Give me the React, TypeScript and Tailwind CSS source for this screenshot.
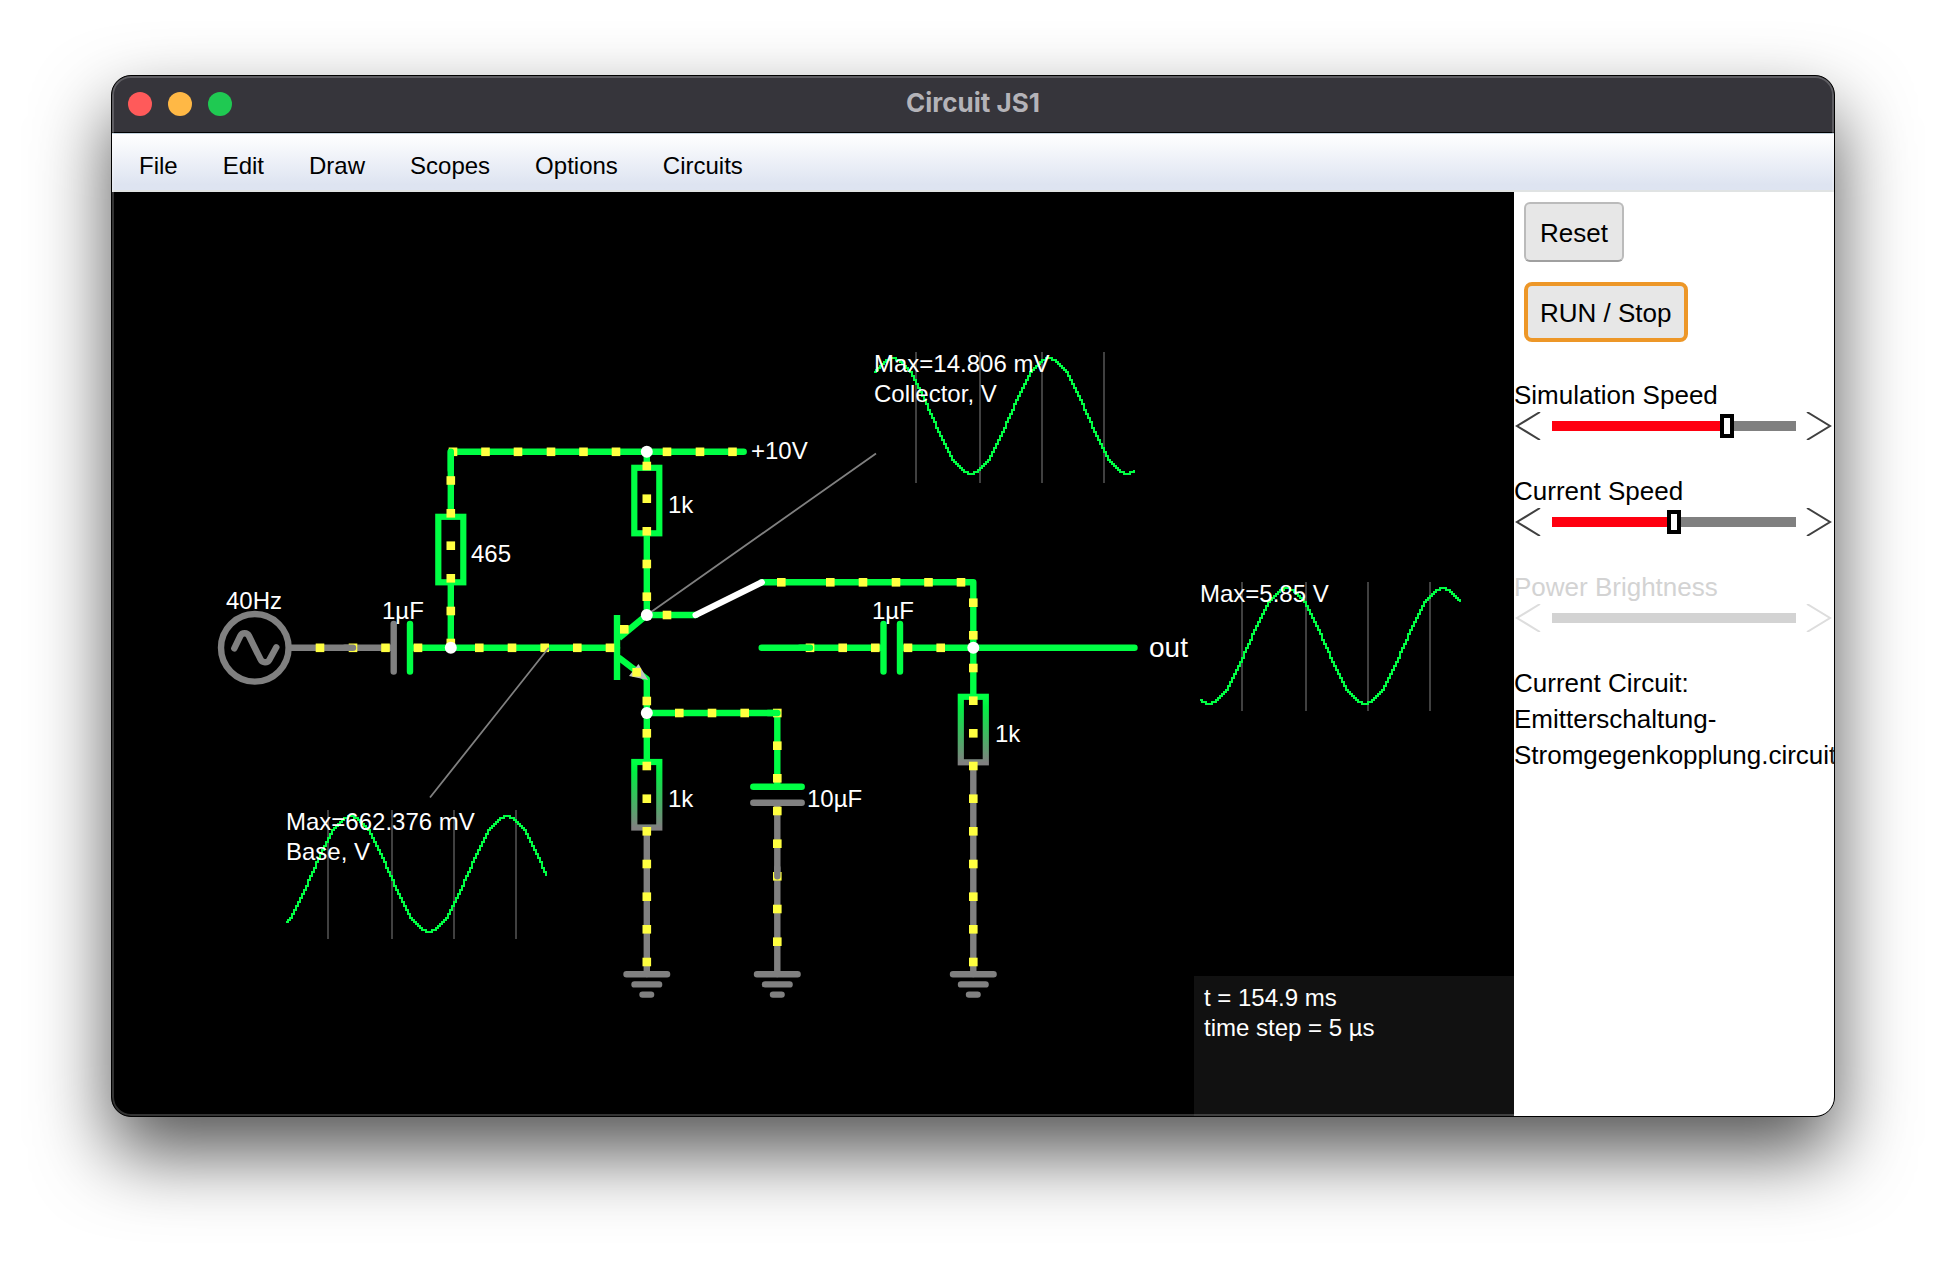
import React from "react";

const GREEN = "#00ff44";
const GRAY = "#808080";
const YELLOW = "#ffff40";

type Point = [number, number];

const column = (x: number, ys: number[]): Point[] => ys.map((y) => [x, y]);
const row = (y: number, xs: number[]): Point[] => xs.map((x) => [x, y]);

const MENUS = ["File", "Edit", "Draw", "Scopes", "Options", "Circuits"];

const CURRENT_DOTS: Point[] = [
  ...row(451.8, [453, 485.5, 518, 551, 583.5, 616, 667, 700, 732.5]),
  ...column(450.8, [480.5, 513.3, 545.7, 578.3, 611, 643]),
  ...row(647.8, [320, 353, 385.5, 418, 479.3, 512, 544.7, 577.3, 610]),
  ...column(646.8, [466, 498.7, 531.3, 564, 596.7, 701, 733.3, 766, 798.7, 831.3, 864, 896.7, 929.3, 962]),
  ...row(713, [679.3, 712, 744.7, 777.3]),
  ...column(777.3, [745.7, 778.3, 811, 843.7, 876.3, 909, 941.7]),
  [667, 615],
  ...row(582.3, [781.3, 830.3, 863, 896, 928.5, 961]),
  ...row(647.8, [810, 842.7, 875.3, 908, 940.7]),
  ...column(973.3, [602.7, 635.3, 668, 700.7, 733.3, 766, 798.7, 831.3, 864, 896.7, 929.3, 962]),
  [624.3, 629.3],
  [636.7, 672.3],
];

const NODES: Point[] = [
  [646.8, 451.8],
  [450.8, 647.8],
  [646.8, 615],
  [646.8, 713],
  [973.3, 647.8],
];

const LABELS: { x: number; y: number; text: string; large?: boolean }[] = [
  { x: 226, y: 609, text: "40Hz" },
  { x: 382, y: 619, text: "1µF" },
  { x: 471, y: 562, text: "465" },
  { x: 751, y: 459, text: "+10V" },
  { x: 668, y: 513, text: "1k" },
  { x: 668, y: 807, text: "1k" },
  { x: 807, y: 807, text: "10µF" },
  { x: 995, y: 742, text: "1k" },
  { x: 872, y: 619, text: "1µF" },
  { x: 1149, y: 657, text: "out", large: true },
];

function Wire({ d, color = GREEN, cap = "round" }: { d: string; color?: string; cap?: "round" | "butt" }) {
  return <path d={d} fill="none" stroke={color} strokeWidth={6.4} strokeLinecap={cap} strokeLinejoin="round" />;
}

function Resistor({ x, y, stroke }: { x: number; y: number; stroke: string }) {
  return <rect x={x - 12.5} y={y} width={25} height={65.5} fill="#000" stroke={stroke} strokeWidth={6.2} />;
}

function Ground({ x }: { x: number }) {
  return <Wire color={GRAY} d={`M${x - 20.3} 974.3H${x + 20.3}M${x - 12.3} 984.4H${x + 12.3}M${x - 4.3} 994.6H${x + 4.3}`} />;
}

/* Scope trace sampled in two-pixel steps. */
function Scope(props: {
  x: number;
  top: number;
  height: number;
  peak: number;
  mid: number;
  lines: number[];
  captions: string[];
  baseline: number;
}) {
  const { x, top, height, peak, mid, lines, captions, baseline } = props;
  const sample = (px: number) => {
    const value = mid - 57.5 * Math.cos((2 * Math.PI * (px - peak)) / 156);
    return Math.round(value / 2) * 2;
  };
  let d = `M${x} ${sample(x)}`;
  for (let px = x + 2; px <= x + 260; px += 2) d += `H${px}V${sample(px)}`;
  return (
    <g>
      {lines.map((lx) => (
        <path key={lx} d={`M${lx} ${top}V${top + height}`} stroke="#404040" strokeWidth={2} shapeRendering="crispEdges" />
      ))}
      <path d={d} fill="none" stroke={GREEN} strokeWidth={2} shapeRendering="crispEdges" />
      {captions.map((caption, i) => (
        <text key={caption} x={x} y={baseline + i * 30} className="fill-white text-2xl">
          {caption}
        </text>
      ))}
    </g>
  );
}

function CircuitCanvas() {
  return (
    <svg viewBox="112 192 1402 924" className="block h-auto w-full" role="img" aria-label="Circuit diagram">
      <defs>
        <linearGradient id="drop" x1="0" y1="0" x2="0" y2="1">
          <stop offset="0" stopColor={GREEN} />
          <stop offset="0.15" stopColor="#00f042" />
          <stop offset="1" stopColor={GRAY} />
        </linearGradient>
      </defs>

      <Scope x={874} top={352} height={131} peak={1048} mid={416} lines={[916, 980, 1042, 1104]} captions={["Max=14.806 mV", "Collector, V"]} baseline={372} />
      <Scope x={286} top={810} height={129} peak={506} mid={874} lines={[328, 392, 454, 516]} captions={["Max=662.376 mV", "Base, V"]} baseline={830} />
      <Scope x={1200} top={582} height={129} peak={1442} mid={646} lines={[1242, 1306, 1368, 1430]} captions={["Max=5.85 V"]} baseline={602} />

      {/* voltage source */}
      <circle cx={254.8} cy={647.8} r={33.8} fill="none" stroke={GRAY} strokeWidth={6.4} />
      <Wire color={GRAY} d="M234.3 648.3L240.3 636Q241.7 633.3 244.7 633.3T249 636L260.7 659.7Q262 662.3 265 662.3T269.3 660L276.3 647.3" />
      <Wire color={GRAY} d="M291 647.8H393.7M393.7 624V671.5" />

      {/* base network */}
      <Wire d="M410 647.8H617M410 624V671.5M450.8 451.8V514M450.8 583V647.8M450.8 451.8H743.7" />
      <Resistor x={450.8} y={516.8} stroke={GREEN} />

      {/* collector resistor and transistor */}
      <Wire d="M646.8 451.8V466M646.8 535V615" />
      <Resistor x={646.8} y={467.8} stroke={GREEN} />
      <Wire cap="butt" d="M617 615V680" />
      <Wire cap="butt" d="M619 638L646.8 615" />
      <Wire d="M646.8 615H695.7M620 658.5L646.8 679V759" />
      <path d="M648 680L638.5 664L629 676Z" fill="#c0c0c0" />

      {/* emitter branch */}
      <Wire d="M646.8 713H777.3V786.7M753.3 786.7H801.7" />
      <Wire color={GRAY} d="M777.3 802.7V974M753.3 802.7H801.7M646.8 830V974M973.3 765V974" />
      <Resistor x={646.8} y={762} stroke="url(#drop)" />

      {/* switch and output */}
      <Wire d="M761.7 582.3H973.3V695M761.7 647.8H883.5M883.5 624V671.5M900 624V671.5M900 647.8H1134.5" />
      <Resistor x={973.3} y={696.8} stroke="url(#drop)" />
      <Wire color="#fff" d="M695.7 615L761.7 582.3" />

      <Ground x={646.8} />
      <Ground x={777.3} />
      <Ground x={973.3} />

      {CURRENT_DOTS.map(([x, y]) => (
        <rect key={`${x},${y}`} x={x - 4.3} y={y - 4.3} width={8.6} height={8.6} fill={YELLOW} />
      ))}

      {/* wire ends that cover the dots at their joints */}
      <Wire color={GRAY} d="M345 647.8H353M777.3 868V876.3" />
      <Wire d="M450.8 451.8V470M768 713H777.3M800 647.8H810" />

      <path d="M646.8 615L876 453.5M548.7 647.8L430 797.5" stroke={GRAY} strokeWidth={1.8} />
      {NODES.map(([x, y]) => (
        <circle key={`${x},${y}`} cx={x} cy={y} r={6} fill="#fff" />
      ))}

      {LABELS.map(({ x, y, text, large }) => (
        <text key={`${x},${y}`} x={x} y={y} className={large ? "fill-white text-[28px]" : "fill-white text-2xl"}>
          {text}
        </text>
      ))}
    </svg>
  );
}

function Arrow({ direction }: { direction: "left" | "right" }) {
  return (
    <svg viewBox="0 0 28 28" className="block h-7 w-7" fill="none" stroke="currentColor" strokeWidth={2}>
      <path d={direction === "left" ? "M26 0L3 14L26 28" : "M1 0L24 14L1 28"} />
    </svg>
  );
}

function Slider({ id, label, value, disabled = false }: { id: string; label: string; value: number; disabled?: boolean }) {
  const [current, setCurrent] = React.useState(value);
  const rest = disabled ? "#d3d3d3" : "#808080";
  const fill = disabled ? rest : "#ff0010";
  return (
    <div className={disabled ? "text-[#d3d3d3]" : "text-black"}>
      <label htmlFor={id} className="block leading-[30px]">
        {label}
      </label>
      <div className={disabled ? "mt-0.5 flex items-center text-[#dddddd]" : "mt-0.5 flex items-center text-[#404040]"}>
        <button type="button" aria-label={`Decrease ${label}`} disabled={disabled} onClick={() => setCurrent(current - 1)}>
          <Arrow direction="left" />
        </button>
        <input
          id={id}
          type="range"
          min={0}
          max={100}
          value={current}
          disabled={disabled}
          onChange={(e) => setCurrent(Number(e.target.value))}
          className="mx-2.5 h-6 min-w-0 flex-1 appearance-none bg-transparent bg-[length:100%_10px] bg-center bg-no-repeat [&::-webkit-slider-thumb]:h-6 [&::-webkit-slider-thumb]:w-3.5 [&::-webkit-slider-thumb]:appearance-none [&::-webkit-slider-thumb]:border-4 [&::-webkit-slider-thumb]:border-black [&::-webkit-slider-thumb]:bg-white disabled:[&::-webkit-slider-thumb]:opacity-0"
          style={{ backgroundImage: `linear-gradient(to right, ${fill} ${current}%, ${rest} ${current}%)` }}
        />
        <button type="button" aria-label={`Increase ${label}`} disabled={disabled} onClick={() => setCurrent(current + 1)}>
          <Arrow direction="right" />
        </button>
      </div>
    </div>
  );
}

export default function App() {
  return (
    <div className="min-h-screen bg-white px-[111px] pt-[75px] pb-[147px] font-['Liberation_Sans',Arial,sans-serif] text-black">
      <div className="relative overflow-hidden rounded-[20px] border border-black bg-black shadow-[0_36px_76px_rgba(0,0,0,0.67)]">
        <header className="grid h-[57px] grid-cols-[1fr_auto_1fr] items-center border-b border-black bg-[#36353b] px-4">
          <div className="flex gap-4">
            <button type="button" aria-label="Close" className="size-6 rounded-full bg-[#ff5a5a]" />
            <button type="button" aria-label="Minimize" className="size-6 rounded-full bg-[#ffb845]" />
            <button type="button" aria-label="Zoom" className="size-6 rounded-full bg-[#1fc952]" />
          </div>
          <h1 className="pb-0.5 font-[Inter,sans-serif] text-[26px] leading-8 font-bold text-[#b4b3b8]">Circuit JS1</h1>
        </header>

        <nav className="flex h-[59px] items-center gap-[45px] border-t border-b-2 border-t-[#c4d3df] border-b-[#e0e3e3] bg-linear-to-b from-white to-[#dee4f1] to-90% pt-2 pl-[27px] text-2xl">
          {MENUS.map((menu) => (
            <button key={menu} type="button">
              {menu}
            </button>
          ))}
        </nav>

        <div className="flex">
          <main className="relative min-w-0 flex-1 bg-black">
            <CircuitCanvas />
            <div className="absolute right-0 bottom-0 h-[140px] w-80 bg-[#111111] px-2.5 py-[7px] text-2xl leading-[30px] text-white">
              <p>t = 154.9 ms</p>
              <p>time step = 5 µs</p>
            </div>
          </main>

          <aside className="w-80 shrink-0 overflow-hidden bg-white text-[26px]">
            <div className="flex flex-col items-start gap-5 pt-2.5 pl-2.5">
              <button type="button" className="h-[60px] rounded-md border-2 border-[#bbbbbb] border-b-[#a0a0a0] bg-[#e7e7e7] px-3.5 pt-0.5">
                Reset
              </button>
              <button type="button" className="h-[60px] rounded-lg border-4 border-[#ed9728] bg-[#e7e7e7] px-3 pt-0.5">
                RUN / Stop
              </button>
            </div>
            <div className="mt-[38px] flex flex-col gap-9">
              <Slider id="simulation-speed" label="Simulation Speed" value={73} />
              <Slider id="current-speed" label="Current Speed" value={50} />
              <Slider id="power-brightness" label="Power Brightness" value={50} disabled />
            </div>
            <p className="mt-[33px] leading-9">
              Current Circuit:
              <br />
              Emitterschaltung-
              <br />
              Stromgegenkopplung.circuit
            </p>
          </aside>
        </div>
        <div className="pointer-events-none absolute inset-0 rounded-[19px] border-2 border-white/20" />
      </div>
    </div>
  );
}
